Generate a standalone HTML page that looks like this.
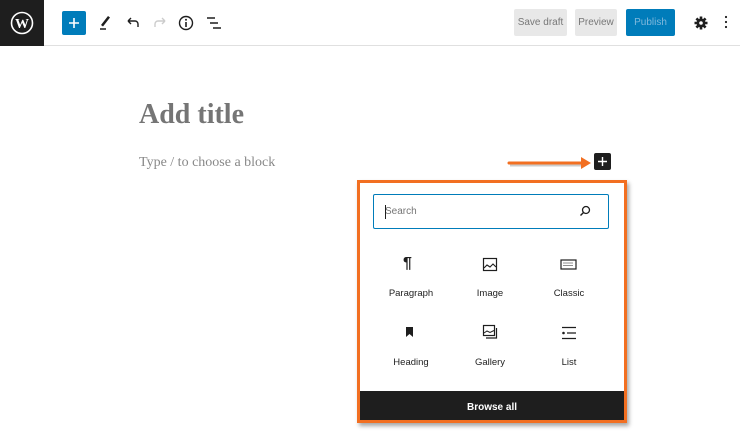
<!DOCTYPE html>
<html><head><meta charset="utf-8"><style>
*{box-sizing:border-box;margin:0;padding:0}
body{width:740px;height:440px;background:#fff;font-family:"Liberation Sans",sans-serif;position:relative;overflow:hidden}
.abs{position:absolute}
.top{left:0;top:0;width:740px;height:46px;border-bottom:1px solid #e0e0e0}
.btn{position:absolute;top:9px;height:27px;font-size:10px;line-height:27px;text-align:center;border-radius:2px}
.lbl{position:absolute;font-size:9.5px;color:#1e1e1e;text-align:center;width:80px}
</style></head><body>
<div class="abs top"></div>
<div class="abs" style="left:0;top:0;width:44px;height:46px;background:#1e1e1e"></div>
<svg class="abs" style="left:10px;top:11px" width="24" height="24" viewBox="0 0 24 24"><circle cx="12" cy="12" r="10.5" fill="none" stroke="#fff" stroke-width="1.6"/><text x="12" y="17" font-family="Liberation Serif" font-weight="bold" font-size="14" fill="#fff" text-anchor="middle">W</text></svg>
<div class="abs" style="left:62px;top:11px;width:24px;height:24px;background:#007cba;border-radius:2px"></div>
<svg class="abs" style="left:62px;top:11px" width="24" height="24"><path d="M12 7v10M7 12h10" stroke="#fff" stroke-width="1.6"/></svg>
<svg class="abs" style="left:98px;top:13px" width="16" height="18"><path d="M3 12l7-9 2 1.5-7 9z" fill="#1e1e1e"/><path d="M2 16h6" stroke="#1e1e1e" stroke-width="1.5"/></svg>
<svg class="abs" style="left:125px;top:15px" width="16" height="16"><path d="M3 6h7a3 3 0 0 1 3 3v3M3 6l3-3M3 6l3 3" stroke="#1e1e1e" stroke-width="1.4" fill="none"/></svg>
<svg class="abs" style="left:152px;top:15px" width="16" height="16"><path d="M13 6H6a3 3 0 0 0-3 3v3M13 6l-3-3M13 6l-3 3" stroke="#ccc" stroke-width="1.4" fill="none"/></svg>
<svg class="abs" style="left:178px;top:15px" width="16" height="16"><circle cx="8" cy="8" r="6.5" fill="none" stroke="#1e1e1e" stroke-width="1.4"/><path d="M8 7v5" stroke="#1e1e1e" stroke-width="1.6"/><circle cx="8" cy="4.8" r="1" fill="#1e1e1e"/></svg>
<svg class="abs" style="left:205px;top:15px" width="18" height="16"><path d="M2 3h8M5 8h8M8 13h8" stroke="#1e1e1e" stroke-width="1.4"/></svg>
<div class="btn" style="left:514px;width:53px;background:#e8e8e8;color:#777">Save draft</div>
<div class="btn" style="left:575px;width:42px;background:#e8e8e8;color:#777">Preview</div>
<div class="btn" style="left:626px;width:49px;background:#007cba;color:#7fb8dc">Publish</div>
<svg class="abs" style="left:693px;top:15px" width="16" height="16" viewBox="0 0 16 16"><g stroke="#1e1e1e" stroke-width="2.6"><path d="M8 1.5v13M1.5 8h13M3.4 3.4l9.2 9.2M12.6 3.4l-9.2 9.2"/></g><circle cx="8" cy="8" r="4.5" fill="#1e1e1e"/><circle cx="8" cy="8" r="1.8" fill="#fff"/></svg>
<svg class="abs" style="left:722px;top:14px" width="8" height="18"><circle cx="4" cy="3" r="1.1" fill="#1e1e1e"/><circle cx="4" cy="8" r="1.1" fill="#1e1e1e"/><circle cx="4" cy="13" r="1.1" fill="#1e1e1e"/></svg>
<div class="abs" style="left:139px;top:99px;font-family:'Liberation Serif',serif;font-weight:bold;font-size:28px;color:#757575">Add title</div>
<div class="abs" style="left:139px;top:155px;font-family:'Liberation Serif',serif;font-size:14px;color:#888">Type / to choose a block</div>
<svg class="abs" style="left:505px;top:154px" width="90" height="20"><path d="M5 11h73" stroke="rgba(0,0,0,.2)" stroke-width="3"/><path d="M4 9h74" stroke="#f26f21" stroke-width="3" stroke-linecap="round"/><path d="M76 3l10 6-10 6z" fill="#f26f21"/></svg>
<div class="abs" style="left:594px;top:153px;width:17px;height:17px;background:#1e1e1e;border-radius:2px"></div>
<svg class="abs" style="left:594px;top:153px" width="17" height="17"><path d="M8.5 4v9M4 8.5h9" stroke="#fff" stroke-width="1.4"/></svg>
<div class="abs" style="left:357px;top:180px;width:270px;height:243px;border:3px solid #f26f21;background:#fff;box-shadow:2px 3px 4px rgba(0,0,0,.35)"></div>
<div class="abs" style="left:373px;top:194px;width:236px;height:35px;border:1.5px solid #007cba;border-radius:2px"></div>
<div class="abs" style="left:385px;top:206px;font-size:10px;color:#757575">Search</div>
<div class="abs" style="left:385px;top:205px;width:1px;height:14px;background:#1e1e1e"></div>
<svg class="abs" style="left:579px;top:205px" width="12" height="12"><circle cx="7" cy="5" r="3.5" fill="none" stroke="#1e1e1e" stroke-width="1.3"/><path d="M4.5 7.5L1.5 10.5" stroke="#1e1e1e" stroke-width="1.4"/></svg>
<div class="abs" style="left:403px;top:255px;font-size:16px;font-weight:bold;color:#1e1e1e">¶</div>
<svg class="abs" style="left:482px;top:257px" width="16" height="16"><rect x="1.5" y="1.5" width="13" height="12" fill="none" stroke="#1e1e1e" stroke-width="1.2"/><path d="M2 11l3-3 3 2 3-3 3 3" fill="none" stroke="#1e1e1e" stroke-width="1.1"/></svg>
<svg class="abs" style="left:560px;top:259px" width="18" height="12"><rect x="1" y="1" width="15" height="9" fill="none" stroke="#1e1e1e" stroke-width="1.2"/><path d="M3.5 4h10M3.5 6.5h10" stroke="#1e1e1e" stroke-width="1" stroke-dasharray="1 1"/></svg>
<div class="lbl" style="left:371px;top:288px">Paragraph</div>
<div class="lbl" style="left:450px;top:288px">Image</div>
<div class="lbl" style="left:529px;top:288px">Classic</div>
<svg class="abs" style="left:403px;top:325px" width="12" height="14"><path d="M3 2h7v10l-3.5-3-3.5 3z" fill="#1e1e1e"/></svg>
<svg class="abs" style="left:482px;top:324px" width="17" height="17"><rect x="1.5" y="1.5" width="11" height="10" fill="none" stroke="#1e1e1e" stroke-width="1.2"/><path d="M2 9l3-2 3 1.5 4-2" fill="none" stroke="#1e1e1e" stroke-width="1"/><path d="M4 14h10.5V4" fill="none" stroke="#1e1e1e" stroke-width="1.2"/></svg>
<svg class="abs" style="left:561px;top:326px" width="16" height="14"><path d="M1 1.5h14M6 7h9M1 12.5h14" stroke="#1e1e1e" stroke-width="1.2"/><circle cx="2.5" cy="7" r="1.3" fill="#1e1e1e"/></svg>
<div class="lbl" style="left:371px;top:357px">Heading</div>
<div class="lbl" style="left:450px;top:357px">Gallery</div>
<div class="lbl" style="left:529px;top:357px">List</div>
<div class="abs" style="left:360px;top:391px;width:264px;height:29px;background:#1e1e1e;color:#fff;font-size:10px;font-weight:bold;text-align:center;line-height:34px">Browse all</div>
</body></html>
